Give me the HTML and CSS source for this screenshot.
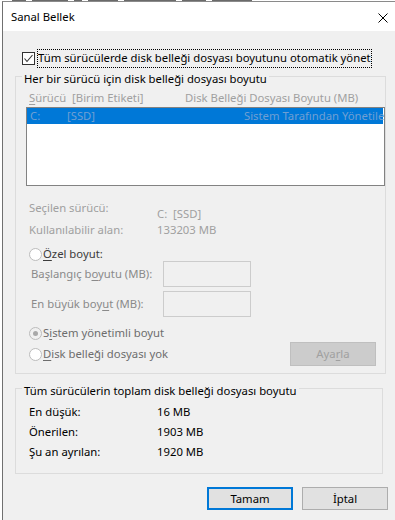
FILE: index.html
```html
<!DOCTYPE html>
<html lang="tr">
<head>
    <meta charset="UTF-8">
    <meta name="viewport" content="width=device-width, initial-scale=1.0">
    <title>Sanal Bellek</title>
    <link rel="stylesheet" href="styles.css">
</head>
<body>

    <div class="backdrop">
        <span style="width: 14px"></span>
        <span style="width: 36px"></span>
        <span style="width: 8px"></span>
        <span style="width: 30px"></span>
        <span style="width: 52px"></span>
        <span style="width: 24px"></span>
        <span style="width: 40px"></span>
    </div>

    <div class="window">
        <div class="titlebar">
            <span class="title">Sanal Bellek</span>
            <svg class="close" width="10" height="10" viewBox="0 0 10 10"><path d="M0.5 0.5 L9.5 9.5 M9.5 0.5 L0.5 9.5" stroke="#000" stroke-width="1" fill="none"/></svg>
        </div>

        <div class="content">
            <label class="auto">
                <span class="checkbox"><svg width="11" height="11" viewBox="0 0 11 11"><path d="M1.5 5.5 L4 8.5 L9.5 2" stroke="#333" stroke-width="1.1" fill="none"/></svg></span>
                <span class="focus">Tüm sürücülerde disk belleği dosyası boyutunu otomatik yönet</span>
            </label>

            <fieldset class="group drives">
                <legend>Her bir sürücü için disk belleği dosyası boyutu</legend>

                <div class="cols muted">
                    <span class="col-drive"><u>S</u>ürücü&nbsp; [Birim Etiketi]</span>
                    <span>Disk Belleği Dosyası Boyutu (MB)</span>
                </div>

                <div class="listbox">
                    <div class="row selected">
                        <span class="cell-letter">C:</span>
                        <span class="cell-label">[SSD]</span>
                        <span class="cell-size">Sistem Tarafından Yönetilen</span>
                    </div>
                </div>

                <div class="info muted">
                    <div class="info-row">
                        <span class="key">Seçilen sürücü:</span>
                        <span class="val drop">C:&nbsp; [SSD]</span>
                    </div>
                    <div class="info-row">
                        <span class="key">Kullanılabilir alan:</span>
                        <span class="val">133203 MB</span>
                    </div>
                </div>

                <div class="radio custom"><span class="dot"></span><span><u>Ö</u>zel boyut:</span></div>

                <div class="field first">
                    <span class="field-label">Başlangıç b<u>o</u>yutu (MB):</span>
                    <span class="input"></span>
                </div>
                <div class="field">
                    <span class="field-label">En büyük boy<u>u</u>t (MB):</span>
                    <span class="input"></span>
                </div>

                <div class="radio system"><span class="dot checked"></span><span>S<u>i</u>stem yönetimli boyut</span></div>

                <div class="last-row">
                    <div class="radio none"><span class="dot"></span><span><u>D</u>isk belleği dosyası yok</span></div>
                    <button class="btn set" disabled>Aya<u>r</u>la</button>
                </div>
            </fieldset>

            <fieldset class="group totals">
                <legend>Tüm sürücülerin toplam disk belleği dosyası boyutu</legend>
                <div class="total-row"><span class="key">En düşük:</span><span>16 MB</span></div>
                <div class="total-row"><span class="key">Önerilen:</span><span>1903 MB</span></div>
                <div class="total-row"><span class="key">Şu an ayrılan:</span><span>1920 MB</span></div>
            </fieldset>

            <div class="actions">
                <button class="btn default">Tamam</button>
                <button class="btn">İptal</button>
            </div>
        </div>
    </div>

</body>
</html>
```

FILE: styles.css
```css
* {
    margin: 0;
    padding: 0;
    box-sizing: border-box;
}

body {
    font-family: "Noto Sans", "Segoe UI", sans-serif;
    font-size: 11.3px;
    line-height: 16px;
    color: #000;
    background-color: #fff;
    overflow: hidden;
}

u {
    text-decoration-thickness: 1px;
    text-underline-offset: 2px;
}

/* bottom edge of the window behind the dialog */
.backdrop {
    height: 1px;
    display: flex;
    gap: 6px;
    padding-left: 12px;
}

.backdrop span {
    height: 1px;
    background-color: #6a6a6a;
}

.window {
    margin-left: 2px;
    width: 393px;
    height: 519px;
    border-left: 1px solid #707070;
    border-top: 1px solid #8a8a8a;
    background-color: #f0f0f0;
}

.titlebar {
    height: 29px;
    display: flex;
    align-items: center;
    justify-content: space-between;
    padding: 0 7px 0 8px;
    background-color: #fff;
}

.close {
    margin-top: 2px;
}

.content {
    width: 380px;
    padding: 18px 0 0 12px;
}

.auto {
    display: flex;
    align-items: center;
    height: 19px;
    padding-left: 7px;
}

.checkbox {
    width: 13px;
    height: 13px;
    border: 1px solid #333;
    background-color: #fff;
    display: flex;
    align-items: center;
    justify-content: center;
}

.focus {
    margin-left: 2px;
    padding: 0 1px;
    height: 19px;
    line-height: 18px;
    outline: 1px dotted #000;
    outline-offset: -1px;
    white-space: nowrap;
}

.group {
    width: 368px;
    border: 1px solid #dcdcdc;
    padding: 0;
}

.group legend {
    margin-left: 6px;
    padding: 6px 2px 0;
    line-height: 16px;
}

.drives {
    margin-top: -3px;
    padding-bottom: 7px;
}

.muted {
    color: #a0a0a0;
}

.cols {
    display: flex;
    margin-top: 3px;
    padding-left: 13px;
}

.col-drive {
    width: 156px;
}

.listbox {
    margin: 1px 0 0 10px;
    width: 359px;
    height: 79px;
    border: 1px solid #828282;
    background-color: #fff;
    overflow: hidden;
}

.row {
    display: flex;
    height: 16px;
    white-space: nowrap;
}

.row.selected {
    background-color: #0078d7;
    color: #6f9fd3;
    margin-right: 1px;
}

.cell-letter {
    flex: none;
    width: 40px;
    padding-left: 3px;
}

.cell-label {
    flex: none;
    width: 177px;
}

.info {
    margin-top: 14px;
    padding-left: 13px;
}

.info-row {
    display: flex;
    height: 22px;
}

.info-row + .info-row {
    height: 16px;
}

.info-row .key,
.total-row .key {
    width: 128px;
}

.drop {
    margin-top: 6px;
}

.radio {
    display: flex;
    align-items: center;
    height: 16px;
    padding-left: 13px;
    color: #6d6d6d;
}

.radio.custom {
    margin-top: 8px;
    color: #3c3c3c;
}

.dot {
    width: 13px;
    height: 13px;
    margin-right: 1px;
    border: 1px solid #bcbcbc;
    border-radius: 50%;
    background-color: #fff;
    display: flex;
    align-items: center;
    justify-content: center;
}

.dot.checked {
    background-color: #f0f0f0;
}

.dot.checked::after {
    content: "";
    width: 5px;
    height: 5px;
    border-radius: 50%;
    background-color: #a8a8a8;
}

.field {
    display: flex;
    align-items: center;
    margin-top: 4px;
    padding-left: 15px;
    color: #8a8a8a;
}

.field.first {
    margin-top: -1px;
}

.field-label {
    width: 132px;
}

.input {
    width: 88px;
    height: 26px;
    border: 1px solid #cccccc;
    background-color: #f0f0f0;
}

.radio.system {
    margin-top: 8px;
}

.last-row {
    display: flex;
    align-items: flex-start;
    justify-content: space-between;
    padding-right: 9px;
}

.last-row .radio {
    margin-top: 5px;
}

.btn {
    width: 86px;
    height: 23px;
    font: inherit;
    line-height: 16px;
    color: #000;
    background-color: #e1e1e1;
    border: 1px solid #adadad;
}

.btn.set {
    height: 24px;
    margin-top: 1px;
    color: #a0a0a0;
    background-color: #cccccc;
    border-color: #bfbfbf;
}

.btn.default {
    border: 2px solid #0078d7;
}

.totals {
    margin-top: 3px;
    padding-bottom: 11px;
}

.total-row {
    display: flex;
    height: 20px;
    align-items: center;
    padding-left: 13px;
}

.totals legend + .total-row {
    margin-top: 3px;
}

.actions {
    display: flex;
    justify-content: flex-end;
    gap: 9px;
    margin: 13px -5px 0 0;
}
```
